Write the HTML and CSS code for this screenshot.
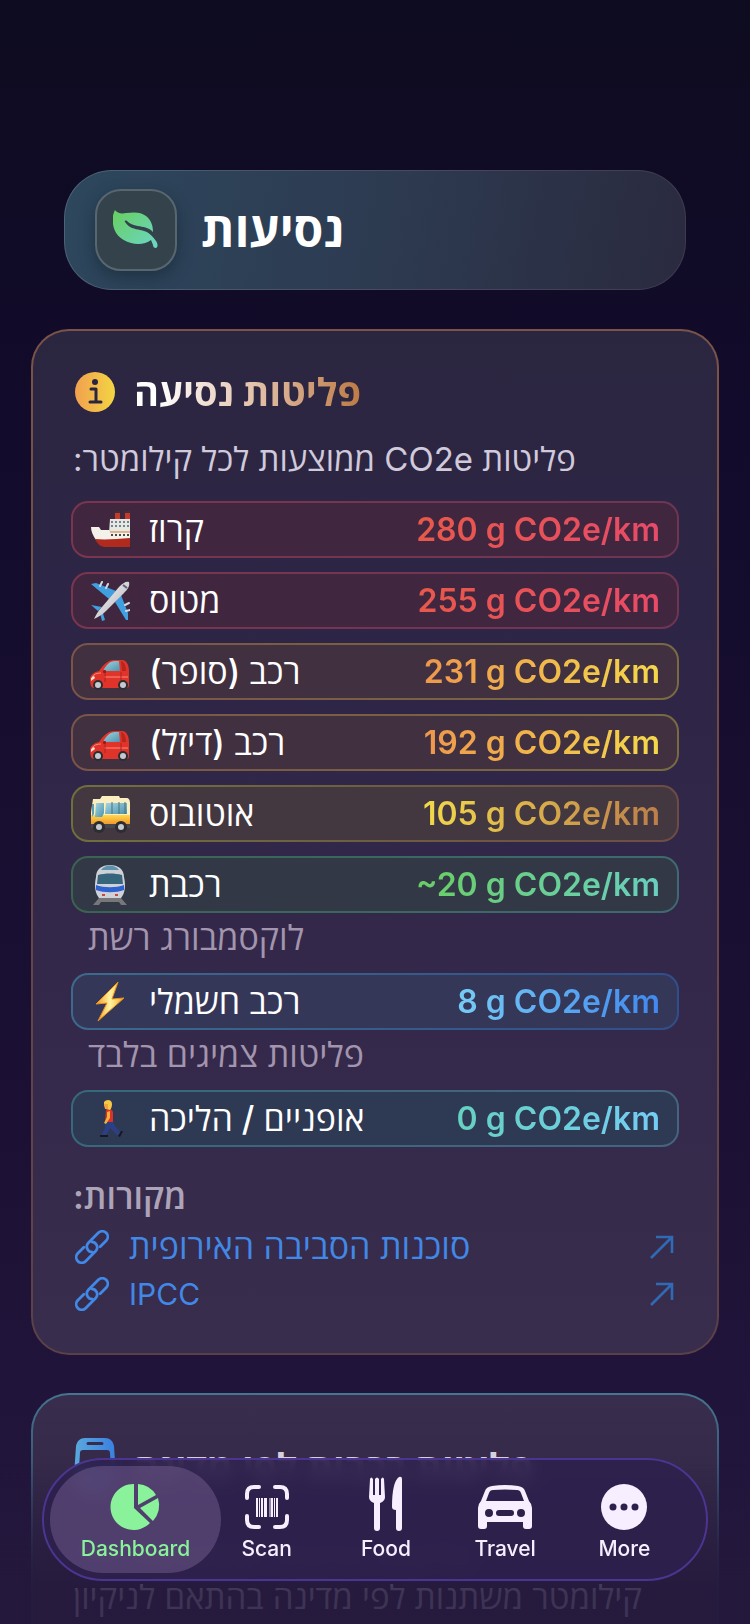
FILE: index.html
```html
<!DOCTYPE html>
<html lang="he">

<head>
  <meta charset="UTF-8" />
  <meta name="viewport" content="width=device-width, initial-scale=1.0" />
  <title>נסיעות</title>
  <link rel="stylesheet" href="styles.css">
</head>

<body>

  <!-- shared gradients and repeated icons -->
  <svg class="defs" width="0" height="0" aria-hidden="true">
    <defs>
      <linearGradient id="leaf-fill" x1="0" y1="0" x2="1" y2="1">
        <stop offset="0" stop-color="#67cf5c" />
        <stop offset="1" stop-color="#6cd6c8" />
      </linearGradient>
      <linearGradient id="info-fill">
        <stop offset="0" stop-color="#f1a04f" />
        <stop offset="1" stop-color="#f3d543" />
      </linearGradient>
      <linearGradient id="train-fill">
        <stop offset="0" stop-color="#5aa9de" />
        <stop offset="1" stop-color="#3a7fe0" />
      </linearGradient>
      <linearGradient id="body-grad" x1="0" y1="0" x2="1" y2="1">
        <stop offset="0" stop-color="#ffffff" />
        <stop offset="1" stop-color="#a9a9b2" />
      </linearGradient>
      <linearGradient id="bolt-grad" x1="0" y1="0" x2="1" y2="0">
        <stop offset="0" stop-color="#f39a1f" />
        <stop offset="0.5" stop-color="#fff3a0" />
        <stop offset="1" stop-color="#f6a623" />
      </linearGradient>
      <linearGradient id="bus-grad" x1="0" y1="0" x2="0" y2="1">
        <stop offset="0" stop-color="#ffd84a" />
        <stop offset="1" stop-color="#f08a24" />
      </linearGradient>
      <linearGradient id="glass" x1="0" y1="0" x2="1" y2="1">
        <stop offset="0" stop-color="#a5d6e2" />
        <stop offset="1" stop-color="#4c93ad" />
      </linearGradient>
    </defs>
    <symbol id="car" viewBox="0 0 40 40">
      <path d="M0 27c0-4 4-7 9-8 5-7 9-11 15-11h8c5 0 7 6 7 11v14c0 2-1 3-3 3H4c-3 0-4-4-4-9z" fill="#e0342b" />
      <path d="M13 19c3-6 7-10 12-10h4l1 10z" fill="url(#glass)" />
      <path d="M31 9c4 1 5 6 5 10h-4z" fill="#b8251f" />
      <path d="M2 25c2-3 5-4 9-4M14 25h24" stroke="#ff8a76" stroke-width="1" fill="none" />
      <path d="M15 19v11M31 20v10" stroke="#b3211c" stroke-width="1" />
      <circle cx="8" cy="33" r="5" fill="#2b2d33" />
      <circle cx="8" cy="33" r="3" fill="#c5c8cc" />
      <circle cx="33" cy="33" r="5" fill="#2b2d33" />
      <circle cx="33" cy="33" r="3" fill="#c5c8cc" />
      <path d="M1 26l3-2 1 2-4 3z" fill="#ffe9d6" />
      <rect x="13" y="18" width="3" height="3" rx="1" fill="#9c1a17" />
    </symbol>
    <symbol id="link" viewBox="0 0 34 34">
      <g transform="translate(17 17) rotate(-45)" fill="none" stroke="currentColor" stroke-width="2.8" stroke-linecap="round">
        <path id="link-half" d="M6 5.5H14.500A5.500 5.500 0 0 0 14.500-5.500H0.500A5.500 5.500 0 0 0-3.400 3.900" />
        <use href="#link-half" transform="rotate(180)" />
      </g>
    </symbol>
    <symbol id="arrow" viewBox="0 0 24 24">
      <path d="M1 23L22 2M6 2h16v16" fill="none" stroke="currentColor" stroke-width="2.6" />
    </symbol>
  </svg>

  <main class="screen">
    <header class="page-header">
      <div class="page-icon">
        <svg width="46" height="40" viewBox="0 0 46 40">
          <path d="M2 0c2 3 6 4 11 3 9-1 15-1 20 3 5 4 7 9 7 16-5-5-10-5-15-6-5-1-8-2-11-5-1-1-3 0-2 1 4 6 10 7 15 8 7 1 11 4 16 11 2 3 2 6 0 7-2 0-3-1-3-3l-2-5c-5 4-13 5-20 3C7 30 1 23 0 14-1 8 0 4 2 0z" fill="url(#leaf-fill)" />
        </svg>
      </div>
      <h1 class="page-title" dir="auto">נסיעות</h1>
    </header>

    <section class="card card-travel">
      <div class="card-head">
        <svg width="42" height="42" viewBox="0 0 42 42">
          <circle cx="21" cy="21" r="20" fill="url(#info-fill)" />
          <circle cx="21" cy="11" r="3" fill="#2b2640" />
          <path d="M17 18h5v12M16 31h11" fill="none" stroke="#2b2640" stroke-width="3" stroke-linecap="round" stroke-linejoin="round" />
        </svg>
        <h2 class="card-title title-orange" dir="auto">פליטות נסיעה</h2>
      </div>
      <p class="intro" dir="auto">פליטות CO2e ממוצעות לכל קילומטר:</p>

      <ul class="modes">
        <li>
          <div class="mode red">
            <svg class="emoji" viewBox="0 0 40 40">
              <path d="M25 1h5v9h-5zM35 1h5v9h-5z" fill="#c63a2c" />
              <path d="M25 1h5v2h-5zM35 1h5v2h-5z" fill="#3b3434" />
              <path d="M20 9h20v14H19z" fill="#e9e7e2" />
              <path d="M21 12h19M21 16h19" stroke="#6f8794" stroke-width="2" stroke-dasharray="2 2" />
              <path d="M1 17h8l2 3h8l1 2h20v8H6c-3-4-5-9-5-13z" fill="#f4f1ea" />
              <path d="M21 25h19" stroke="#4a4a4a" stroke-width="2" stroke-dasharray="2 2" />
              <path d="M20 22h20" stroke="#c9823e" stroke-width="1" />
              <path d="M5 29c10 1 22 0 35-1v9H15c-5 0-8-4-10-8z" fill="#b02a1e" />
            </svg>
            <span class="mode-name" dir="auto">קרוז</span>
            <strong class="mode-value">280 g CO2e/km</strong>
          </div>
        </li>
        <li>
          <div class="mode red">
            <svg class="emoji" viewBox="0 0 40 40">
              <path d="M1 3l5-1 20 8-7 8zM38 39l-2 0-11-18 6-7 7 18z" fill="#3f9fdf" />
              <path d="M1 24l11 2-4 4zM15 39l-3-10-2 3 2 8z" fill="#3f9fdf" />
              <path d="M39 1c1 4-1 7-5 11L16 30c-4 4-8 6-12 8 2-4 4-8 8-12L29 6c4-4 7-6 10-5z" fill="url(#body-grad)" />
              <path d="M10 5l2-4M16 7l2-4M35 24l4-2M36 30l4-1" stroke="#d3d8de" stroke-width="2" stroke-linecap="round" />
              <path d="M33 4l4 3" stroke="#5b6470" stroke-width="2" />
            </svg>
            <span class="mode-name" dir="auto">מטוס</span>
            <strong class="mode-value">255 g CO2e/km</strong>
          </div>
        </li>
        <li>
          <div class="mode orange">
            <svg class="emoji"><use href="#car" /></svg>
            <span class="mode-name" dir="auto">רכב (סופר)</span>
            <strong class="mode-value">231 g CO2e/km</strong>
          </div>
        </li>
        <li>
          <div class="mode orange">
            <svg class="emoji"><use href="#car" /></svg>
            <span class="mode-name" dir="auto">רכב (דיזל)</span>
            <strong class="mode-value">192 g CO2e/km</strong>
          </div>
        </li>
        <li>
          <div class="mode yellow">
            <svg class="emoji" viewBox="0 0 40 40">
              <path d="M3 5h7l2-3h17l1 2h6c3 0 4 2 4 5v24H1V18z" fill="#fbeec0" />
              <path d="M1 21h39v11H1z" fill="url(#bus-grad)" />
              <path d="M1 30h39v4H1z" fill="#47484d" />
              <path d="M6 9h8v10l-2 4H5z" fill="url(#glass)" />
              <path d="M16 9h21v11H15z" fill="url(#glass)" />
              <path d="M22 8v12M29 8v12M35 8v12" stroke="#4d6f78" stroke-width="1" />
              <path d="M2 10l2 0v10l-2 3z" fill="#5a9eb0" />
              <circle cx="9" cy="33" r="6" fill="#2b2d33" />
              <circle cx="9" cy="33" r="3" fill="#c5c8cc" />
              <circle cx="31" cy="33" r="6" fill="#2b2d33" />
              <circle cx="31" cy="33" r="3" fill="#c5c8cc" />
            </svg>
            <span class="mode-name" dir="auto">אוטובוס</span>
            <strong class="mode-value">105 g CO2e/km</strong>
          </div>
        </li>
        <li>
          <div class="mode green">
            <svg class="emoji" viewBox="0 0 40 40">
              <path d="M9 33h22l6 7h-6l-2-3H11l-2 3H3z" fill="#77777a" />
              <path d="M6 12c0-8 6-12 14-12s14 4 14 12c2 9 1 16-3 21H9C5 28 4 21 6 12z" fill="#cfd1d8" />
              <path d="M11 5c4-6 14-6 18 0z" fill="#5e93ad" />
              <path d="M8 10c7-2 17-2 24 0l1 9H7z" fill="#37657b" />
              <path d="M6 20c8 3 20 3 28 0v5c-8 3-20 3-28 0z" fill="#2f62d0" />
              <path d="M12 30h3M25 30h3" stroke="#c84a3d" stroke-width="2" />
            </svg>
            <span class="mode-name" dir="auto">רכבת</span>
            <strong class="mode-value">~20 g CO2e/km</strong>
          </div>
          <p class="note" dir="auto">לוקסמבורג רשת</p>
        </li>
        <li>
          <div class="mode blue">
            <svg class="emoji" viewBox="0 0 40 40">
              <path d="M28 0L6 22l11-1L8 39l26-23-12 1z" fill="url(#bolt-grad)" stroke="#e8921c" stroke-width="1" />
            </svg>
            <span class="mode-name" dir="auto">רכב חשמלי</span>
            <strong class="mode-value">8 g CO2e/km</strong>
          </div>
          <p class="note" dir="auto">פליטות צמיגים בלבד</p>
        </li>
        <li>
          <div class="mode teal">
            <svg class="emoji" viewBox="0 0 40 40">
              <path d="M15 22l8 0 2 5 6 7-3 3-8-8-4 8h-5l4-8z" fill="#2d3f83" />
              <path d="M10 36h8v2h-8zM28 37l3-5 2 0-3 6z" fill="#16181f" />
              <path d="M16 11c3-2 6-1 7 2v10h-8z" fill="#d8322b" />
              <path d="M17 13l3-1v7l-4 6-2-1 3-6z" fill="#f2b13b" />
              <path d="M14 3c2-3 8-3 8 2 0 3-1 5-2 6l-4-1c-2-2-2-5-2-7z" fill="#f7c945" />
              <path d="M14 5l4 0v5h-3z" fill="#f1a53a" />
            </svg>
            <span class="mode-name" dir="auto">אופניים / הליכה</span>
            <strong class="mode-value">0 g CO2e/km</strong>
          </div>
        </li>
      </ul>

      <h3 class="sources-title" dir="auto">מקורות:</h3>
      <a class="source" href="#eea">
        <svg class="link-icon"><use href="#link" /></svg>
        <span class="source-name" dir="auto">סוכנות הסביבה האירופית</span>
        <svg class="arrow-icon"><use href="#arrow" /></svg>
      </a>
      <a class="source" href="#ipcc">
        <svg class="link-icon"><use href="#link" /></svg>
        <span class="source-name latin">IPCC</span>
        <svg class="arrow-icon"><use href="#arrow" /></svg>
      </a>
    </section>

    <section class="card card-train">
      <div class="card-head">
        <svg width="42" height="60" viewBox="0 0 42 60">
          <path fill-rule="evenodd" d="M11 1h20c5 0 8 3 9 8l2 30c0 7-3 11-9 11H9c-6 0-9-4-9-11L2 9c1-5 4-8 9-8zM14 5a1 1 0 0 0 0 3h14a1 1 0 0 0 0-3zM9 13q-3 0-3 3L5 31h32l-1-15q0-3-3-3z" fill="url(#train-fill)" />
          <path d="M9 51h24l6 8H3z" fill="url(#train-fill)" />
        </svg>
        <h2 class="card-title title-light" dir="auto">פליטות רכבות לפי מדינה</h2>
      </div>
      <p class="intro" dir="auto">פליטות הרכבת הממוצעות לכל<br>קילומטר משתנות לפי מדינה בהתאם לניקיון</p>
    </section>
  </main>

  <div class="bottom-fade"></div>

  <nav class="tab-bar">
    <button class="tab active">
      <svg width="48" height="48" viewBox="0 0 48 48">
        <path d="M22 1v24l16 15A23 23 0 1 1 22 1zM26 1a23 23 0 0 1 18 11L26 22zM46 15a23 23 0 0 1-5 23L28 25z" fill="currentColor" />
      </svg>
      Dashboard
    </button>
    <button class="tab">
      <svg width="48" height="48" viewBox="0 0 48 48">
        <path d="M4 15v-4q0-7 7-7h5M32 4h5q7 0 7 7v4M44 33v4q0 7-7 7h-5M16 44h-5q-7 0-7-7v-4" fill="none" stroke="currentColor" stroke-width="4" stroke-linecap="round" />
        <path d="M14 15v19M19 15v19M29 15v19M34 15v19" stroke="currentColor" stroke-width="2" />
        <path d="M16.500 15v19M23.500 15v19M27 15v19M31.500 15v19" stroke="currentColor" stroke-width="1" />
        <path d="M22 15v19" stroke="currentColor" stroke-width="2" />
      </svg>
      Scan
    </button>
    <button class="tab">
      <svg class="food-icon" width="34" height="54" viewBox="0 0 34 54">
        <path d="M0 20L1 2q1-3 3 0v16h2V2q2-3 4 0v16h2V2q2-3 3 0l1 18q0 4-5 6v25q0 3-3 3t-3-3V26q-5-2-5-6z" fill="currentColor" />
        <path d="M33 2v49q0 3-3 3t-3-3V33q-4 0-4-3 0-25 7-30 3-1 3 2z" fill="currentColor" />
      </svg>
      Food
    </button>
    <button class="tab">
      <svg width="56" height="48" viewBox="0 0 56 48">
        <path fill-rule="evenodd" d="M15 3q13-2 26 0 6 1 7 5l4 10q3 3 3 7v18q0 3-3 3h-3q-3 0-3-3v-4H10v4q0 3-3 3H4q-3 0-3-3V25q0-4 3-7L8 8q1-4 7-5zM16 7q-3 0-4 3l-3 8h38l-3-8q-1-3-4-3-12-1-24 0zM12 26a4 4 0 1 0 0 8 4 4 0 0 0 0-8zM44 26a4 4 0 1 0 0 8 4 4 0 0 0 0-8zM22 27a3 3 0 0 0 0 6h12a3 3 0 0 0 0-6z" fill="currentColor" />
      </svg>
      Travel
    </button>
    <button class="tab">
      <svg width="48" height="48" viewBox="0 0 48 48">
        <circle cx="24" cy="24" r="23" fill="currentColor" />
        <circle cx="13" cy="24" r="3.500" fill="#2e204c" />
        <circle cx="24" cy="24" r="3.500" fill="#2e204c" />
        <circle cx="35" cy="24" r="3.500" fill="#2e204c" />
      </svg>
      More
    </button>
  </nav>

</body>

</html>
```
FILE: styles.css
```css
* {
  box-sizing: border-box;
}

body {
  margin: 0;
  background: linear-gradient(#0e0c20, #120b2b 25%, #1c1135 70%, #25173f);
  background-attachment: fixed;
  color: white;
  font-family: Inter, "Open Sans", "Noto Sans", "DejaVu Sans", sans-serif;
}

h1,
h2,
h3,
p,
ul {
  margin: 0;
  padding: 0;
}

.defs {
  position: absolute;
}

.screen {
  height: 100vh;
  overflow: hidden;
  padding: 170px 31px 0;
}

.page-header {
  display: flex;
  align-items: center;
  gap: 24px;
  height: 120px;
  margin: 0 33px 39px;
  padding: 0 30px;
  border: 1px solid transparent;
  border-radius: 48px;
  background:
    linear-gradient(100deg, #2d475d, #2d3b51 50%, #2a2a3f) padding-box,
    linear-gradient(100deg, #4a6478, #4a4560 60%, #3d3a50) border-box;
}

.page-icon {
  display: flex;
  align-items: center;
  justify-content: center;
  width: 82px;
  height: 82px;
  border: 2px solid #586670;
  border-radius: 26px;
  background-color: #34424c;
  box-shadow: 0 6px 16px rgba(10, 25, 35, 0.4);
}

.page-title {
  font-size: 48px;
  font-weight: 700;
  line-height: 60px;
}

.card {
  margin-bottom: 38px;
  padding: 40px;
  border: 2px solid transparent;
  border-radius: 38px;
}

.card-travel {
  padding-bottom: 36px;
  background:
    linear-gradient(#2b2640, #2d2545 25%, #33284a 60%, #382d4c) padding-box,
    linear-gradient(#7b5348, #6b4748 50%, #5c4048) border-box;
}

.card-train {
  padding-top: 42px;
  background:
    linear-gradient(#382d4c, #2c2142) padding-box,
    linear-gradient(#457591, #2c2f51 60%) border-box;
}

.card-head {
  display: flex;
  align-items: center;
  gap: 18px;
}

.card-head svg {
  margin-left: 1px;
}

.card-title {
  font-size: 38px;
  font-weight: 700;
  line-height: 42px;
  color: transparent;
  -webkit-background-clip: text;
  background-clip: text;
}

.title-orange {
  background-image: linear-gradient(90deg, white 10%, #e9cdbb 45%, #bd7a45);
}

.title-light {
  color: #d6d0dc;
}

.intro {
  margin: 26px 0 22px;
  font-size: 33px;
  line-height: 40px;
  color: #d0cadb;
  text-align: left;
}

.card-train .intro {
  margin-top: 40px;
}

.modes {
  display: flex;
  flex-direction: column;
  gap: 14px;
  margin-right: -2px;
  margin-left: -2px;
  list-style: none;
}

.mode {
  display: flex;
  align-items: center;
  gap: 19px;
  height: 57px;
  padding: 0 17px 0 17px;
  border: 2px solid transparent;
  border-radius: 17px;
  background:
    linear-gradient(var(--fill), var(--fill)) padding-box,
    linear-gradient(90deg, var(--line-from), var(--line-to)) border-box;
}

.emoji {
  flex: none;
  width: 40px;
  height: 40px;
}

.mode-name {
  flex: 1;
  font-size: 34px;
  font-weight: 500;
  line-height: 40px;
  text-align: left;
}

.mode-value {
  font-size: 32px;
  font-weight: 600;
  line-height: 40px;
  color: transparent;
  background-image: linear-gradient(100deg, var(--text-from), var(--text-to));
  -webkit-background-clip: text;
  background-clip: text;
}

.red {
  --fill: #40273f;
  --line-from: #7b354f;
  --line-to: #6f3553;
  --text-from: #e8594a;
  --text-to: #e84a68;
}

.orange {
  --fill: #413040;
  --line-from: #7b5447;
  --line-to: #786a42;
  --text-from: #ee964d;
  --text-to: #f4d94a;
}

.yellow {
  --fill: #433740;
  --line-from: #6f6f3c;
  --line-to: #6d4c45;
  --text-from: #f3db4b;
  --text-to: #bb7c4a;
}

.green {
  --fill: #333847;
  --line-from: #3a6450;
  --line-to: #3e6a70;
  --text-from: #6ace62;
  --text-to: #68d0c0;
}

.blue {
  --fill: #353759;
  --line-from: #3d6a8c;
  --line-to: #2f4f8a;
  --text-from: #77cdf5;
  --text-to: #3f87ee;
}

.teal {
  --fill: #2e3953;
  --line-from: #36697a;
  --line-to: #456480;
  --text-from: #66d1c0;
  --text-to: #74cdf5;
}

.note {
  height: 46px;
  padding: 5px 17px 0;
  font-size: 34px;
  line-height: 40px;
  color: #a295ad;
  text-align: left;
}

.sources-title {
  margin: 30px 0 6px;
  font-size: 34px;
  font-weight: 600;
  line-height: 40px;
  color: #ada4b8;
  text-align: left;
}

.source {
  display: flex;
  align-items: center;
  gap: 20px;
  height: 47px;
  padding: 0 3px 0 2px;
  color: #4288e6;
  font-size: 34px;
  line-height: 40px;
  text-decoration: none;
}

.source-name {
  flex: 1;
  text-align: left;
}

.latin {
  font-size: 30px;
}

.link-icon {
  width: 34px;
  height: 34px;
}

.arrow-icon {
  width: 24px;
  height: 24px;
  color: #3069b4;
}

.bottom-fade {
  position: fixed;
  right: 0;
  bottom: 0;
  left: 0;
  height: 160px;
  background: linear-gradient(rgba(36, 25, 60, 0), rgba(36, 25, 60, 0.85) 80%);
  pointer-events: none;
}

.tab-bar {
  position: fixed;
  right: 42px;
  bottom: 43px;
  left: 42px;
  display: flex;
  height: 123px;
  padding: 6px 22px 6px 6px;
  border: 2px solid #4c3590;
  border-radius: 62px;
  background-color: rgba(46, 32, 76, 0.9);
  backdrop-filter: blur(8px);
}

.tab {
  display: flex;
  flex: 1;
  flex-direction: column;
  align-items: center;
  justify-content: flex-end;
  gap: 4px;
  padding: 0 0 10px;
  border: none;
  background: none;
  color: #f7eeff;
  font-family: Inter, sans-serif;
  font-size: 21px;
  font-weight: 500;
  line-height: 28px;
  cursor: pointer;
}

.tab svg {
  flex: 0 0 48px;
  overflow: visible;
}

.tab .food-icon {
  flex-basis: 54px;
}

.tab.active {
  flex: 0 0 171px;
  margin-right: -14px;
  border-radius: 54px;
  background-color: rgba(124, 102, 150, 0.45);
  color: #89f29a;
}
```
